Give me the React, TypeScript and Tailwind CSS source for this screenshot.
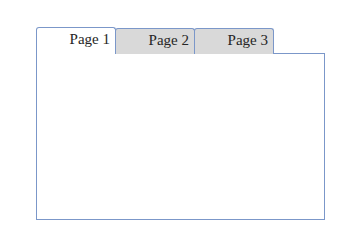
import React, { useState } from "react";

const PAGES = ["Page 1", "Page 2", "Page 3"];

export default function App() {
  const [active, setActive] = useState(0);

  return (
    <div className="w-[361px] h-[248px] bg-white pt-[27px] pl-[36px]" style={{ fontFamily: '"Liberation Serif", "DejaVu Serif", serif' }}>
      <div className="flex items-end h-[27px] relative z-10">
        {PAGES.map((p, i) => {
          const on = i === active;
          return (
            <button
              key={p}
              type="button"
              onClick={() => setActive(i)}
              className={
                on
                  ? "w-[80px] h-[27px] -mr-px border border-b-0 border-[#7b97c9] rounded-t-[3px] bg-white text-right pr-[5px] pb-[3px] text-[15px] text-[#262626]"
                  : "w-[80px] h-[26px] -mr-px border border-b-0 border-[#7b97c9] rounded-t-[3px] bg-[#d9d9d9] text-right pr-[5px] pb-[2px] text-[15px] text-[#262626]"
              }
            >
              {p}
            </button>
          );
        })}
      </div>
      <div className="w-[289px] h-[167px] -mt-px border border-[#7b97c9] bg-white" />
    </div>
  );
}
